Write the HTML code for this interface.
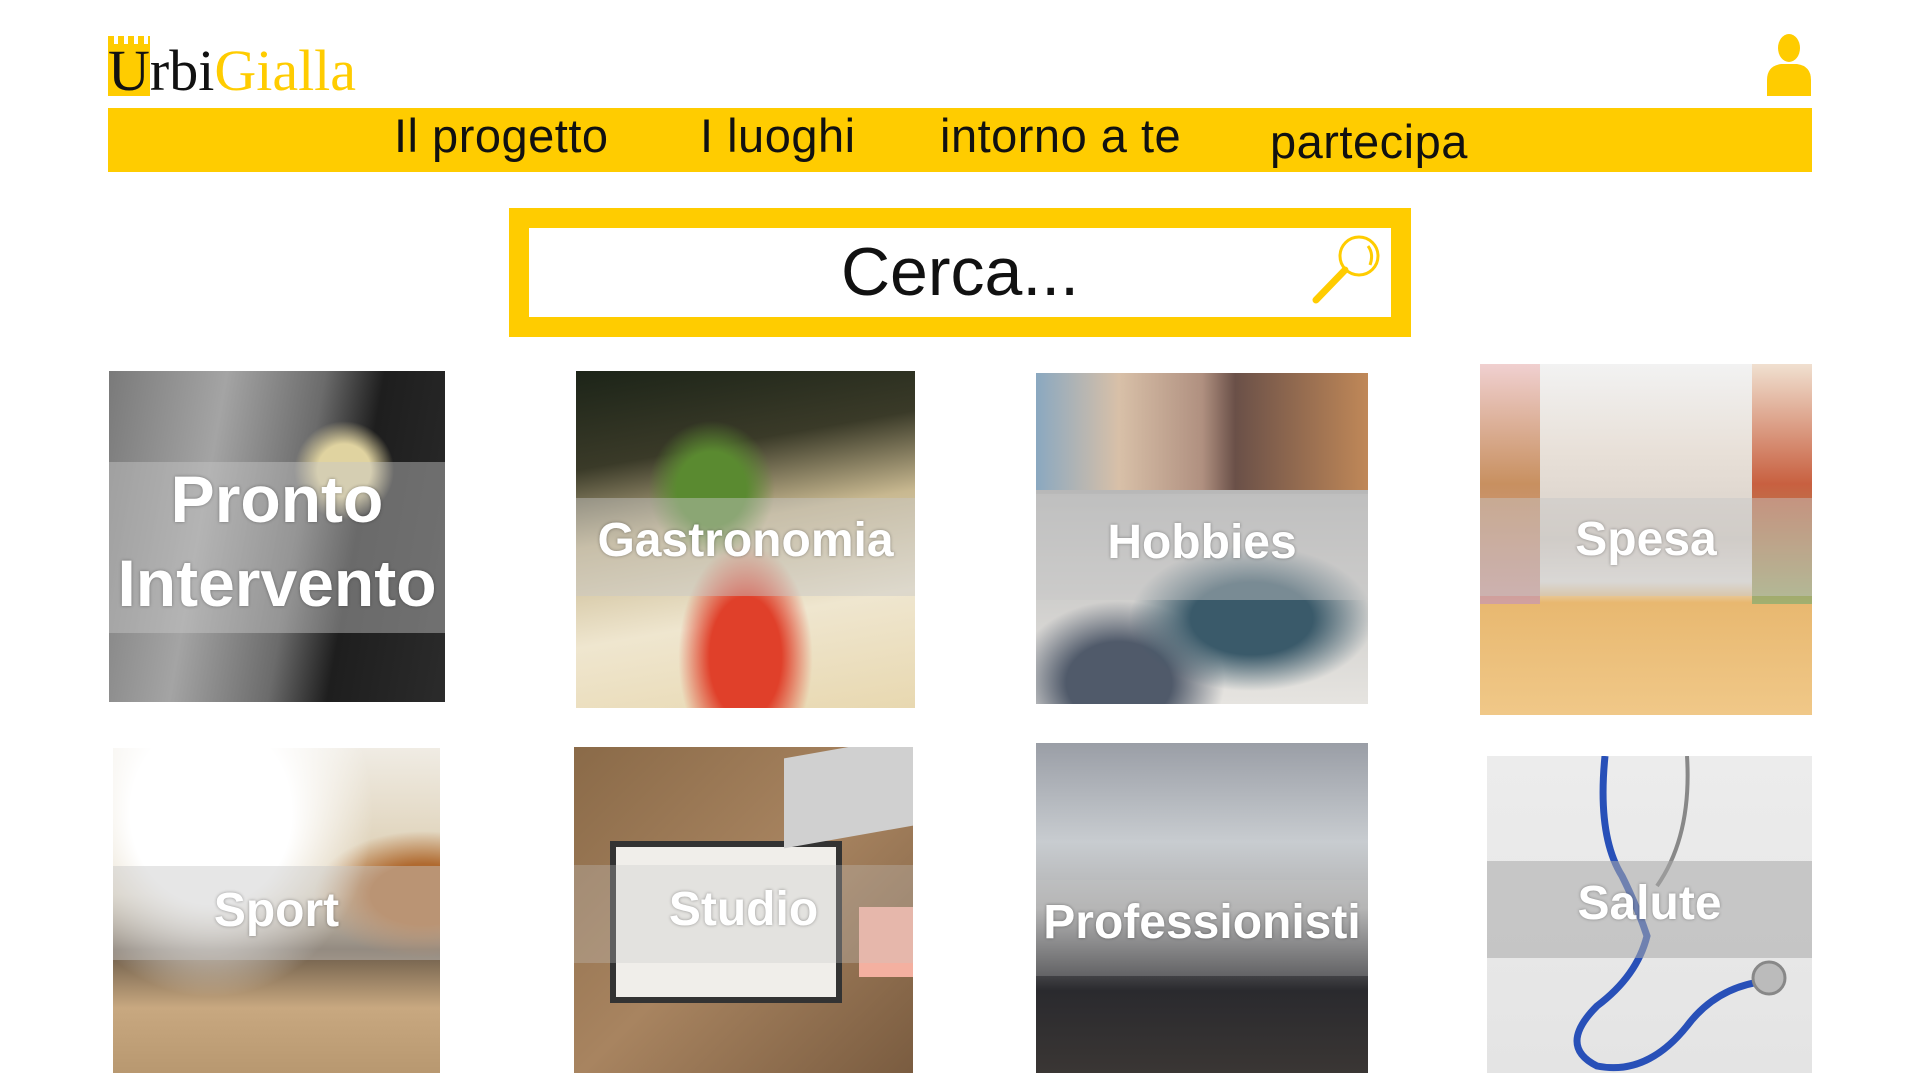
<!DOCTYPE html>
<html><head><meta charset="utf-8">
<style>
*{margin:0;padding:0;box-sizing:border-box}
body{width:1920px;height:1080px;background:#fff;position:relative;overflow:hidden;font-family:"Liberation Sans",sans-serif}
.abs{position:absolute}
.logo{left:108px;top:36px;font-family:"Liberation Serif",serif;font-size:58px;line-height:70px;white-space:nowrap}
.nav{left:108px;top:108px;width:1704px;height:64px;background:#ffcc00}
.nav span{position:absolute;font-size:47px;color:#111;line-height:64px;top:-4px;letter-spacing:0.5px}
.search{left:509px;top:208px;width:902px;height:129px;background:#ffcc00}
.inner{left:529px;top:228px;width:862px;height:89px;background:#fff}
.tile{position:absolute;overflow:hidden}
.band{position:absolute;left:0;right:0;background:rgba(200,200,200,.45)}
.lbl{position:absolute;left:0;right:0;text-align:center;color:#fff;font-weight:bold;font-size:48px;text-shadow:0 0 3px rgba(0,0,0,.35);white-space:nowrap}
</style></head><body>
<div class="abs" style="left:108px;top:40px;width:42px;height:56px;background:#ffcc00"></div>
<div class="abs" style="left:108px;top:36px;width:42px;height:8px;background:repeating-linear-gradient(90deg,#ffcc00 0 6px,#fff 6px 10px)"></div>
<div class="abs logo"><span style="color:#111">Urbi</span><span style="color:#ffcc00">Gialla</span></div>
<svg class="abs" style="left:1765px;top:34px" width="48" height="62" viewBox="0 0 48 62"><ellipse cx="24" cy="14" rx="11" ry="14" fill="#ffcc00"/><path d="M2 62 V46 Q2 32 16 30 H32 Q46 32 46 46 V62 Z" fill="#ffcc00"/></svg>
<div class="abs nav">
<span style="left:286px">Il progetto</span>
<span style="left:592px">I luoghi</span>
<span style="left:832px">intorno a te</span>
<span style="left:1162px;top:2px">partecipa</span>
</div>
<div class="abs search"></div>
<div class="abs inner"></div>
<div class="abs" style="left:529px;width:862px;top:228px;height:89px;text-align:center;font-size:68px;line-height:89px;color:#111">Cerca...</div>
<svg class="abs" style="left:1300px;top:228px" width="90" height="89" viewBox="1300 228 90 89"><circle cx="1359" cy="256" r="19" fill="none" stroke="#ffcc00" stroke-width="3"/><path d="M1368 246 Q1374 254 1370 265" fill="none" stroke="#ffcc00" stroke-width="3"/><path d="M1345 270 L1316 300" stroke="#ffcc00" stroke-width="7" stroke-linecap="round"/><path d="M1346 270 L1341 275" stroke="#ffcc00" stroke-width="3"/></svg>

<div class="tile" style="left:109px;top:371px;width:336px;height:331px;background:radial-gradient(ellipse at 70% 30%,#e0d3a0 0 8%,transparent 15%),linear-gradient(100deg,#7a7a7a 0%,#a4a4a4 30%,#6b6b6b 55%,#1e1e1e 70%,#2b2b2b 100%)">
<div class="band" style="top:91px;height:171px"></div>
<div class="lbl" style="top:86px;font-size:66px;line-height:84px">Pronto<br>Intervento</div></div>

<div class="tile" style="left:576px;top:371px;width:339px;height:337px;background:radial-gradient(ellipse at 40% 35%,#5a8a30 0 12%,transparent 22%),radial-gradient(ellipse at 50% 85%,#e0402a 0 15%,transparent 28%),linear-gradient(170deg,#1c2418 0%,#3a3a28 25%,#c8b890 45%,#efe6cf 70%,#e8d8b0 100%)">
<div class="band" style="top:127px;height:98px"></div>
<div class="lbl" style="top:142px">Gastronomia</div></div>

<div class="tile" style="left:1036px;top:373px;width:332px;height:331px;background:linear-gradient(180deg,transparent 0 117px,#d8d6d2 117px),linear-gradient(90deg,#8aa8c0 0%,#d8c0a8 25%,#b09080 50%,#6a5048 60%,#c08858 100%)">
<div class="abs" style="left:0;top:117px;width:332px;height:214px;background:radial-gradient(ellipse at 65% 60%,#3a5a6a 0 20%,transparent 40%),radial-gradient(ellipse at 25% 90%,#505a6a 0 15%,transparent 30%),linear-gradient(180deg,#b8b8b8,#e6e4e0)"></div>
<div class="band" style="top:121px;height:106px"></div>
<div class="lbl" style="top:142px">Hobbies</div></div>

<div class="tile" style="left:1480px;top:364px;width:332px;height:351px;background:linear-gradient(180deg,#f2f2f2 0%,#e8e0d8 25%,#d8d0c8 50%,#e8e4e0 62%,#e8b870 68%,#f0c888 100%),linear-gradient(90deg,#d05050,#f0f0f0,#50a050)">
<div class="abs" style="left:0;top:0;width:60px;height:240px;background:linear-gradient(180deg,#f0d0d0,#c89060 50%,#d0a0a0)"></div>
<div class="abs" style="right:0;top:0;width:60px;height:240px;background:linear-gradient(180deg,#f0e0d0,#c86040 50%,#a0b070)"></div>
<div class="band" style="top:134px;height:98px"></div>
<div class="lbl" style="top:148px">Spesa</div></div>

<div class="tile" style="left:113px;top:748px;width:327px;height:325px;background:radial-gradient(ellipse at 30% 20%,#fff 0 25%,transparent 50%),radial-gradient(ellipse at 95% 45%,#b06a30 0 12%,transparent 25%),linear-gradient(180deg,#f0ece4 0%,#d8c8a8 45%,#6a5a48 62%,#c8a880 80%,#b89870 100%)">
<div class="band" style="top:118px;height:94px"></div>
<div class="lbl" style="top:135px">Sport</div></div>

<div class="tile" style="left:574px;top:747px;width:339px;height:326px;background:linear-gradient(135deg,#8a6a48,#a88460 50%,#7a5c40)">
<div class="abs" style="left:42px;top:100px;width:220px;height:150px;background:#f0eeea;box-shadow:0 0 0 6px #333"></div>
<div class="abs" style="left:210px;top:0;width:129px;height:90px;background:#d0d0d0;transform:skewY(-10deg)"></div>
<div class="abs" style="left:285px;top:160px;width:54px;height:70px;background:#f4b0a0"></div>
<div class="band" style="top:118px;height:98px;background:rgba(200,200,200,.3)"></div>
<div class="lbl" style="top:135px">Studio</div></div>

<div class="tile" style="left:1036px;top:743px;width:332px;height:330px;background:linear-gradient(180deg,#9a9ea6 0%,#c8ccd0 30%,#b0b0b0 50%,#2a2a2e 75%,#3a3634 100%)">
<div class="band" style="top:137px;height:96px;background:rgba(200,200,200,.25)"></div>
<div class="lbl" style="top:152px">Professionisti</div></div>

<div class="tile" style="left:1487px;top:756px;width:325px;height:317px;background:linear-gradient(180deg,#ececec,#e4e4e4)">
<svg class="abs" style="left:0;top:0" width="325" height="317" viewBox="0 0 325 317"><path d="M118 0 Q110 80 135 120 Q150 150 160 180 Q150 220 110 250 Q70 290 110 310 Q160 320 200 270 Q230 230 280 225" fill="none" stroke="#2850b8" stroke-width="7"/><path d="M200 0 Q205 80 170 130" fill="none" stroke="#888" stroke-width="4"/><circle cx="282" cy="222" r="16" fill="#bbb" stroke="#888" stroke-width="3"/></svg>
<div class="band" style="top:105px;height:97px;left:-8px;background:rgba(170,170,170,.55)"></div>
<div class="lbl" style="top:120px">Salute</div></div>
</body></html>
